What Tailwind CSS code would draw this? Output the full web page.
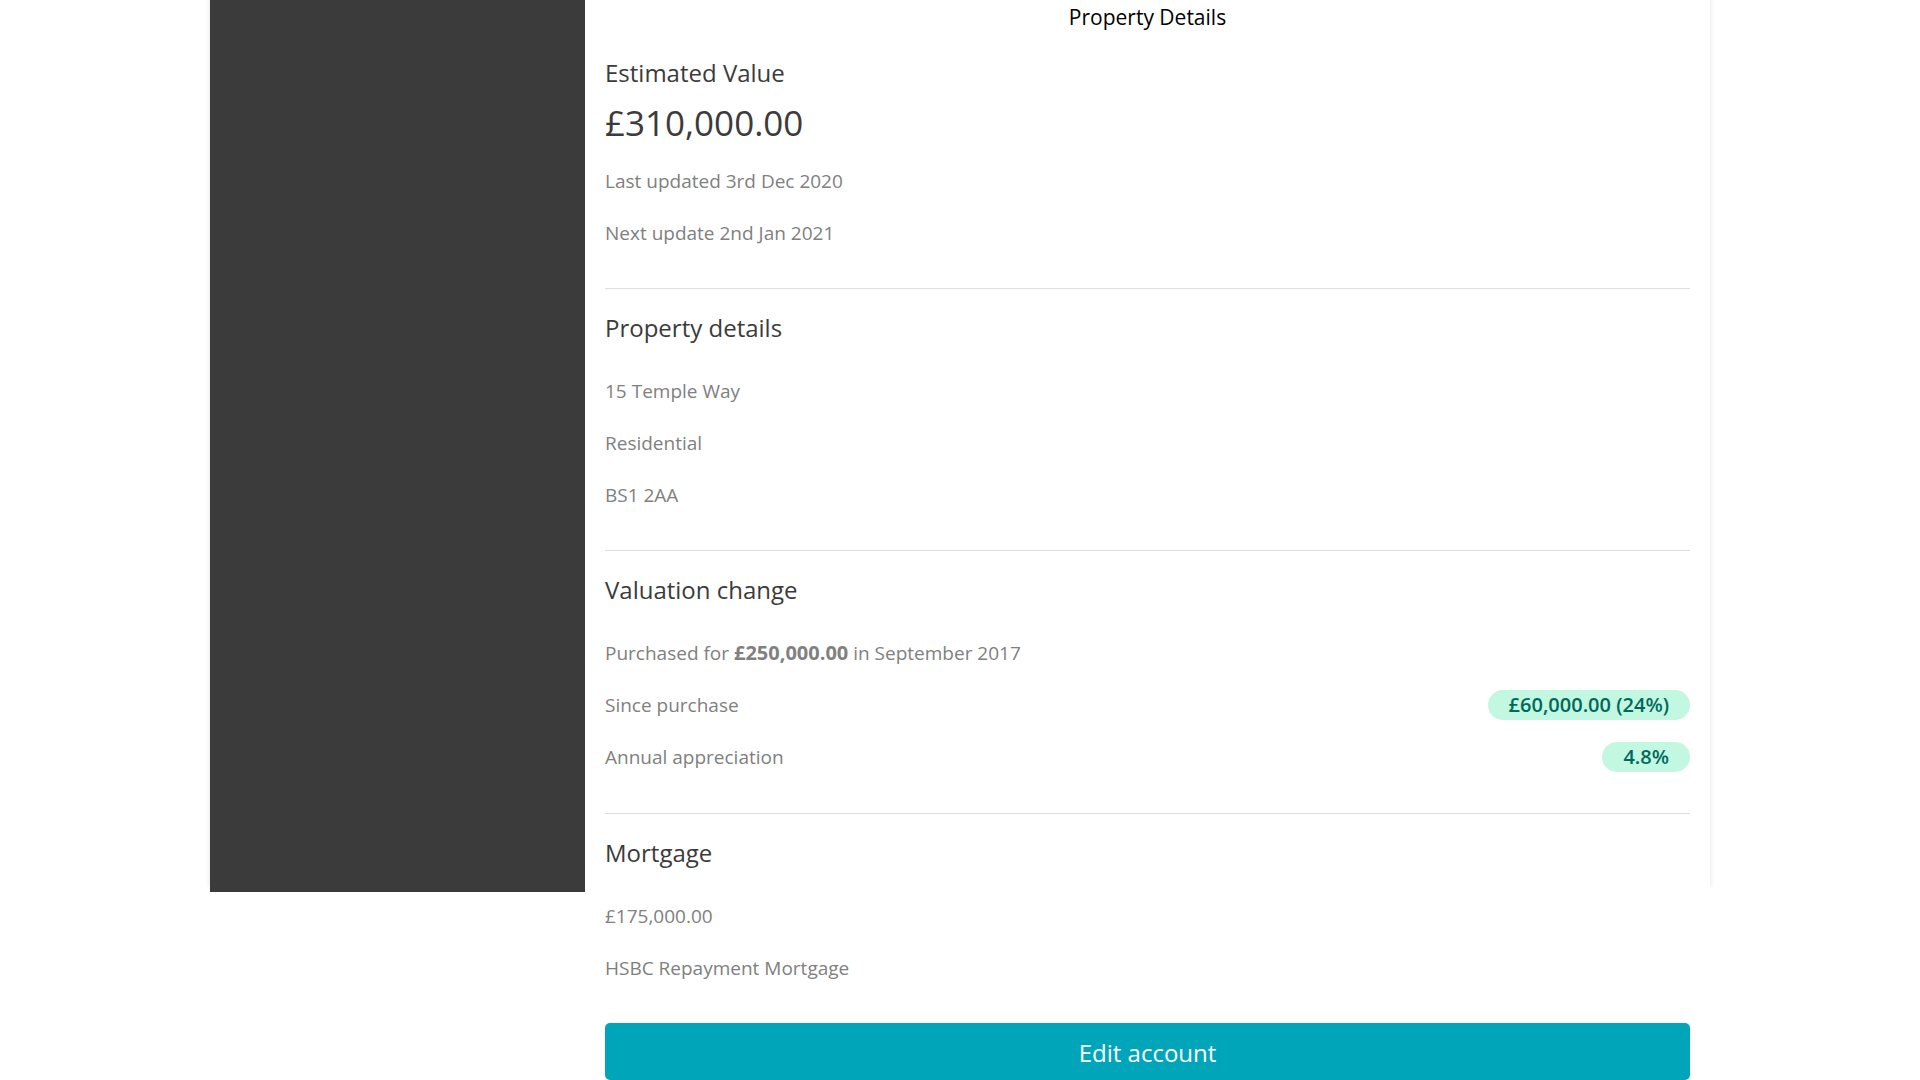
<!DOCTYPE html>
<html lang="en">
<head>
<meta charset="utf-8">
<meta name="viewport" content="width=device-width, initial-scale=1">
<title>Property Details</title>
<script src="https://cdn.jsdelivr.net/npm/@tailwindcss/browser@4"></script>
</head>
<body class="min-h-screen bg-white font-['Segoe_UI','Open_Sans',sans-serif] text-[19px] text-[#808080]">
<div class="relative mx-auto flex max-w-[1500px] items-start">
  <div class="absolute inset-x-0 top-0 -z-10 h-[892px] shadow-[0_-5px_5px_rgba(0,0,0,0.12)]"></div>
  <aside class="h-[892px] w-1/4 shrink-0 bg-[#3b3b3b]"></aside>
  <main class="flex-1 bg-white px-5">
    <h1 class="h-[54px] text-center text-[21px] leading-[34px] text-black">Property Details</h1>
    <section class="pb-[29px]">
      <h2 class="text-2xl leading-[38px] text-[#3b3b3b]">Estimated Value</h2>
      <p class="pt-[3px] pb-1 text-[35px] leading-[56px] text-[#3b3b3b]">£310,000.00</p>
      <p class="leading-[52px]">Last updated 3rd Dec 2020</p>
      <p class="leading-[52px]">Next update 2nd Jan 2021</p>
    </section>
    <section class="border-t border-[#dedede] pt-5 pb-[29px]">
      <h2 class="mb-[18px] text-2xl leading-[38px] text-[#3b3b3b]">Property details</h2>
      <p class="leading-[52px]">15 Temple Way</p>
      <p class="leading-[52px]">Residential</p>
      <p class="leading-[52px]">BS1 2AA</p>
    </section>
    <section class="border-t border-[#dedede] pt-5 pb-[30px]">
      <h2 class="mb-[18px] text-2xl leading-[38px] text-[#3b3b3b]">Valuation change</h2>
      <p class="leading-[52px]">Purchased for <strong class="text-xl leading-[52px] font-bold">£250,000.00</strong> in September 2017</p>
      <div class="flex items-center justify-between leading-[52px]">
        <p>Since purchase</p>
        <span class="rounded-full bg-[#c2f7e1] px-[21px] text-xl leading-[30px] font-semibold text-[#00695c]">£60,000.00 (24%)</span>
      </div>
      <div class="flex items-center justify-between leading-[52px]">
        <p>Annual appreciation</p>
        <span class="rounded-full bg-[#c2f7e1] px-[21px] text-xl leading-[30px] font-semibold text-[#00695c]">4.8%</span>
      </div>
    </section>
    <section class="border-t border-[#dedede] pt-5 pb-[29px]">
      <h2 class="mb-[18px] text-2xl leading-[38px] text-[#3b3b3b]">Mortgage</h2>
      <p class="leading-[52px]">£175,000.00</p>
      <p class="leading-[52px]">HSBC Repayment Mortgage</p>
    </section>
    <button type="button" class="block h-[57px] w-full rounded-[5px] bg-[#00a5ba] pt-0.5 text-2xl text-white">Edit account</button>
  </main>
</div>
</body>
</html>
